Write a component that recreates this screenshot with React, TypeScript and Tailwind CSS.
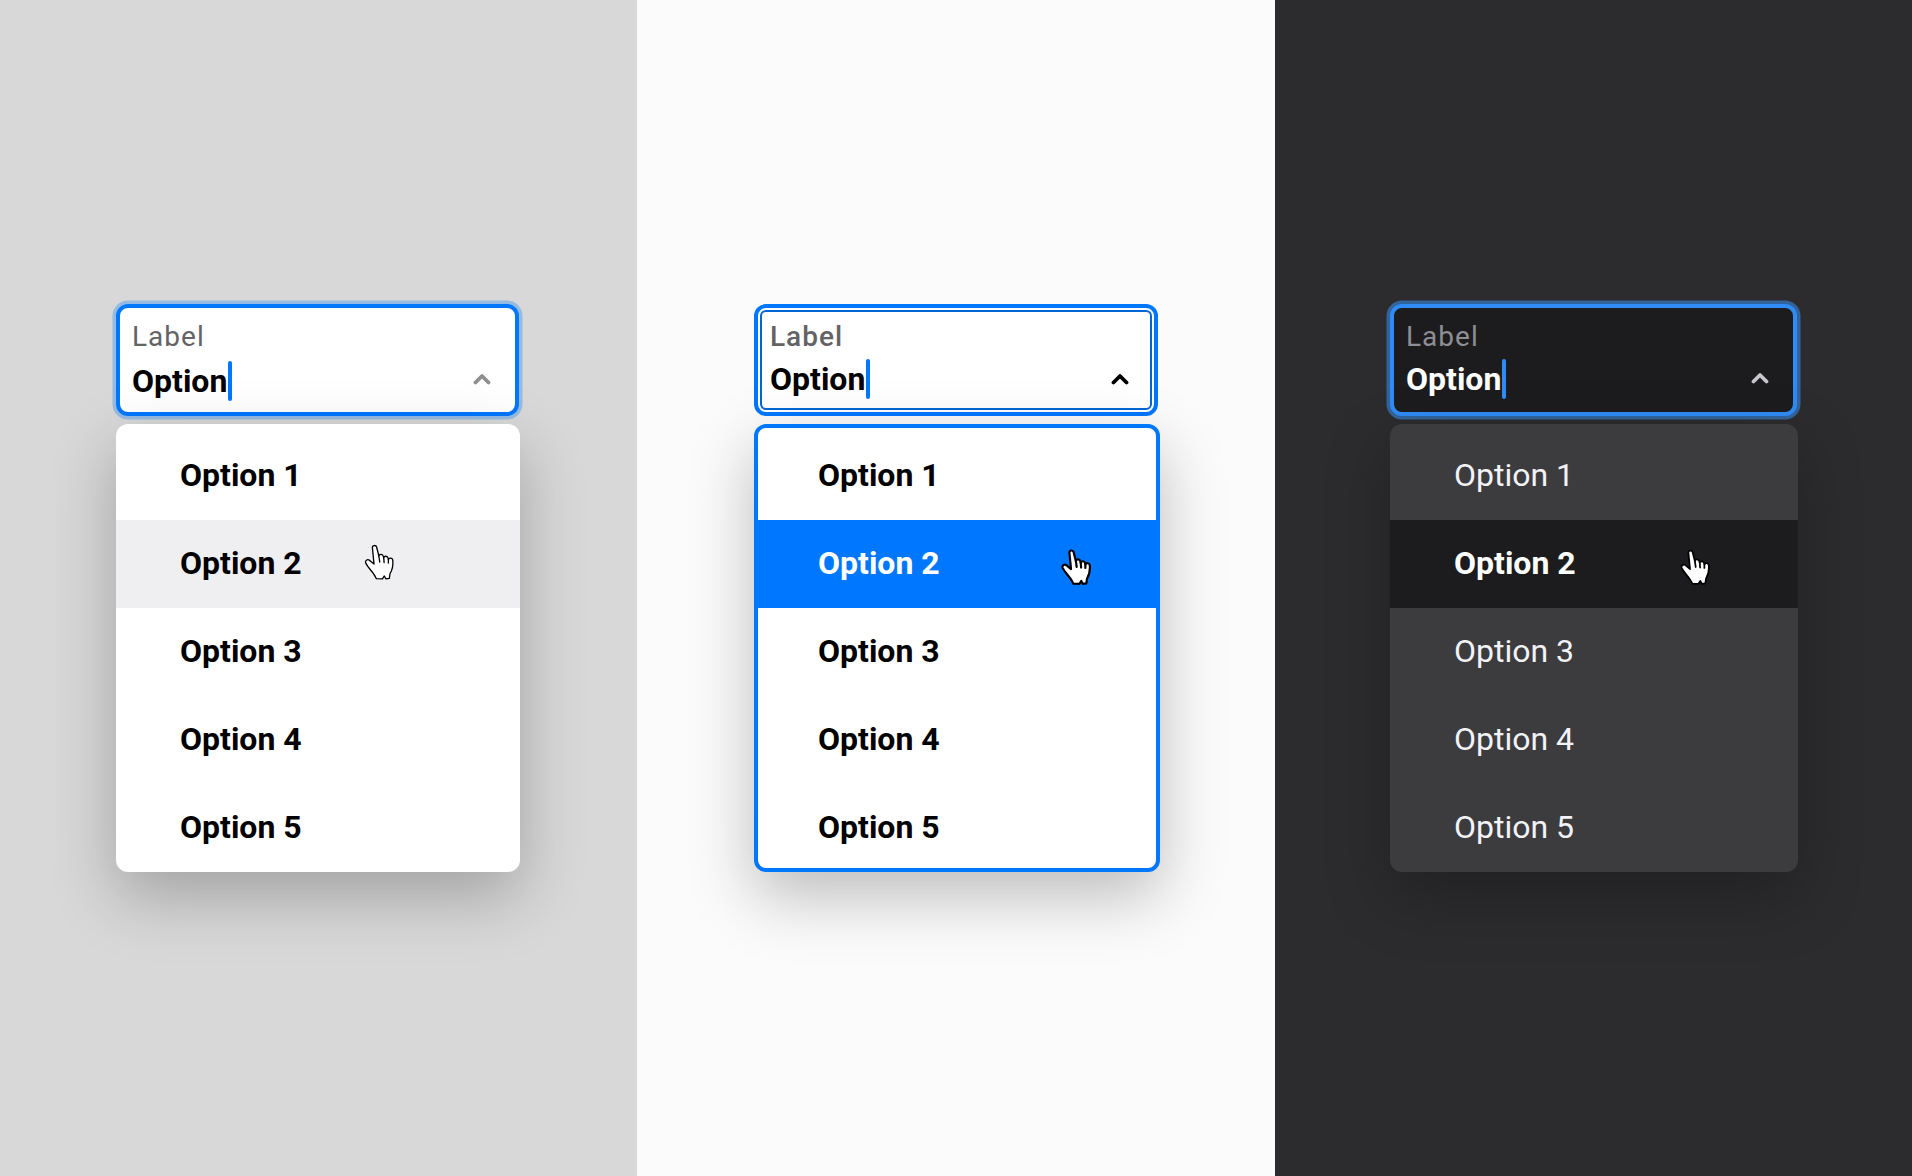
const options = ['Option 1', 'Option 2', 'Option 3', 'Option 4', 'Option 5'];

function Chevron({ className }: { className: string }) {
  return (
    <svg viewBox="0 0 18 12" className={className} fill="none" stroke="currentColor" strokeWidth="3.8" strokeLinecap="round" strokeLinejoin="round">
      <path d="M2.5 9.5 9 3l6.5 6.5" />
    </svg>
  );
}

function Hand({ className, strokeWidth }: { className: string; strokeWidth: number }) {
  return (
    <svg viewBox="0 0 28 33" className={className} fill="#fff" stroke="#000" strokeWidth={strokeWidth} strokeLinejoin="round" strokeLinecap="round">
      <path d="M7.5 3.5C7.2 1 10.8.6 11.4 3l2 8c.5-2.2 3.6-2 4.1.4l.4 1.4c.4-2.2 3.5-2 4 .2l.3 1.2c.6-1.8 3.8-1.6 4 .8.4 4.5-.6 9-2.6 12.3l-.6 4.2-3.2.4-1.4-2.6-1.7 2.6-5.7-.2C9 26 3.6 22.5 1.3 17.3c-.8-2 1.6-3.7 3.4-2.5L9 18.4Z" />
      <path d="M13.4 11l.8 5.5M17.9 12.8l.3 4.2M22.2 14l-.1 3.4" fill="none" />
    </svg>
  );
}

export default function App() {
  return (
    <div className="flex h-[1176px] w-[1912px] overflow-hidden font-['Roboto',sans-serif]">
      {/* light grey */}
      <div className="w-[637px] shrink-0 bg-[#d8d8d9] pl-[116px] pt-[304px]">
        <div className="flex h-[112px] w-[403px] flex-col rounded-[12px] border-4 border-[#0077ff] bg-white pl-[12px] pr-[24px] pt-[11px] shadow-[0_0_0_3.5px_#96bbe2]">
          <span className="text-[28px] leading-[36px] tracking-[1px] text-[#636366]">Label</span>
          <div className="mt-[4px] flex items-center text-[32px] font-bold leading-[44px] text-black">
            <span>Option</span>
            <span className="ml-[1px] h-[40px] w-[4px] rounded-[2px] bg-[#0077ff]" />
            <Chevron className="-mt-[4px] ml-auto h-[12px] w-[18px] text-[#8e8e93]" />
          </div>
        </div>
        <div className="relative mt-[8px] w-[404px] rounded-[12px] bg-white pt-[8px] shadow-[0_24px_64px_rgba(0,0,0,0.25)]">
          {options.map((o, i) => (
            <div key={o} className={`relative flex h-[88px] items-center pb-[2px] pl-[64px] text-[32px] font-bold text-black ${i === 1 ? 'bg-[#efeff1]' : ''}`}>
              {o}
              {i === 1 && <Hand strokeWidth={1.2} className="absolute left-[248px] top-[24px] h-[36px] w-[31px]" />}
            </div>
          ))}
        </div>
      </div>

      {/* white */}
      <div className="w-[637.5px] shrink-0 bg-[#fbfbfb] pl-[117px] pt-[304px]">
        <div className="h-[112px] w-[404px] rounded-[12px] border-4 border-[#0077ff] bg-white p-[2px]">
          <div className="flex h-full flex-col rounded-[6px] border-2 border-[#0066d6] pl-[8px] pr-[21px] pt-[7px]">
            <span className="text-[28px] font-medium leading-[36px] tracking-[1px] text-[#636366]">Label</span>
            <div className="mt-[3px] flex items-center text-[32px] font-bold leading-[42px] text-black">
              <span>Option</span>
              <span className="ml-[1px] h-[40px] w-[4px] rounded-[2px] bg-[#0077ff]" />
              <Chevron className="ml-auto h-[12px] w-[18px] text-black" />
            </div>
          </div>
        </div>
        <div className="relative mt-[8px] h-[448px] w-[406px] rounded-[12px] border-4 border-[#0077ff] bg-white pt-[4px] shadow-[0_24px_64px_rgba(0,0,0,0.25)]">
          {options.map((o, i) => (
            <div key={o} className={`relative -mx-[4px] flex h-[88px] items-center pb-[2px] pl-[64px] text-[32px] font-bold ${i === 1 ? 'bg-[#0077ff] text-white' : 'text-black'}`}>
              {o}
              {i === 1 && <Hand strokeWidth={2} className="absolute left-[307px] top-[29px] h-[36px] w-[31px]" />}
            </div>
          ))}
        </div>
      </div>

      {/* dark */}
      <div className="flex-1 bg-[#2c2c2e] pl-[115.5px] pt-[304px]">
        <div className="flex h-[112px] w-[407px] flex-col rounded-[12px] border-4 border-[#2f8bf5] bg-[#1c1c1e] pl-[12px] pr-[24px] pt-[11px] shadow-[0_0_0_3.5px_#33639b]">
          <span className="text-[28px] leading-[36px] tracking-[1px] text-[#8e8e93]">Label</span>
          <div className="mt-[3px] flex items-center text-[32px] font-bold leading-[42px] text-white">
            <span>Option</span>
            <span className="ml-[1px] h-[40px] w-[4px] rounded-[2px] bg-[#2f8bf5]" />
            <Chevron className="-mt-[2px] ml-auto h-[12px] w-[18px] text-[#c7c7cc]" />
          </div>
        </div>
        <div className="relative mt-[8px] w-[408px] rounded-[12px] bg-[#3c3c3f] pt-[8px] shadow-[0_24px_64px_rgba(0,0,0,0.25)]">
          {options.map((o, i) => (
            <div key={o} className={`relative flex h-[88px] items-center pb-[2px] pl-[64px] text-[32px] ${i === 1 ? 'bg-[#1c1c1e] font-bold text-white' : 'font-normal text-[#f2f2f7]'}`}>
              {o}
              {i === 1 && <Hand strokeWidth={1.6} className="absolute left-[290px] top-[29px] h-[36px] w-[31px]" />}
            </div>
          ))}
        </div>
      </div>
    </div>
  );
}
